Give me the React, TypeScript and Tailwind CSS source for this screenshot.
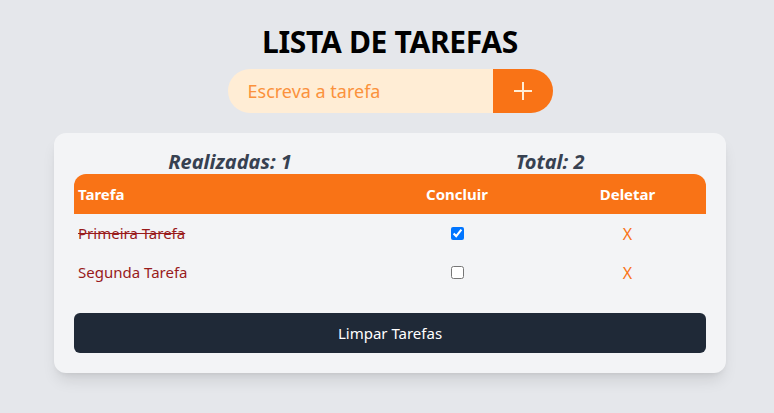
import React from 'react';

const tasks = [
  { id: 1, title: 'Primeira Tarefa', done: true },
  { id: 2, title: 'Segunda Tarefa', done: false },
];

const App: React.FC = () => {
  return (
    <div
      className="min-h-screen bg-[#e5e7eb] flex flex-col items-center pt-[22px] pl-[6px]"
      style={{ fontFamily: '"Noto Sans", "Open Sans", sans-serif' }}
    >
      <h1 className="text-[30px] leading-[39px] font-bold text-black tracking-[-0.3px]">LISTA DE TAREFAS</h1>

      <div className="flex mt-[8px]">
        <input
          className="w-[265px] h-[44px] rounded-l-full bg-[#ffedd5] pl-5 text-lg text-[#fb923c] placeholder:text-[#fb923c] outline-none"
          placeholder="Escreva a tarefa"
        />
        <button className="w-[60px] h-[44px] rounded-r-full bg-[#f97316] flex items-center justify-center">
          <svg width="20" height="20" viewBox="0 0 20 20" fill="none" stroke="#ffedd5" strokeWidth="2">
            <path d="M10 1v18M1 10h18" />
          </svg>
        </button>
      </div>

      <div className="mt-5 w-[672px] bg-[#f3f4f6] rounded-xl shadow-lg px-5 pt-[17px] pb-5">
        <div className="flex text-[20px] leading-6 font-bold italic text-[#374151]">
          <div className="flex-1 text-center pr-2">Realizadas: 1</div>
          <div className="flex-1 text-center">Total: 2</div>
        </div>

        <div className="grid grid-cols-[313px_140px_1fr] bg-[#f97316] rounded-t-xl h-10 items-center text-[15px] font-bold text-white">
          <div className="pl-1">Tarefa</div>
          <div className="text-center">Concluir</div>
          <div className="text-center pl-[22px]">Deletar</div>
        </div>

        {tasks.map((task) => (
          <div key={task.id} className="grid grid-cols-[313px_140px_1fr] h-[39px] items-center text-[15px]">
            <div className={`pl-1 text-[#991b1b] ${task.done ? 'line-through' : ''}`}>{task.title}</div>
            <div className="flex justify-center">
              <input type="checkbox" defaultChecked={task.done} className="w-[13px] h-[13px]" />
            </div>
            <div className="text-center pl-[22px] text-[#f97316] text-base">X</div>
          </div>
        ))}

        <button className="mt-[21px] w-full h-10 bg-[#1f2937] rounded-md text-white text-[15px]">
          Limpar Tarefas
        </button>
      </div>
    </div>
  );
};

export default App;
